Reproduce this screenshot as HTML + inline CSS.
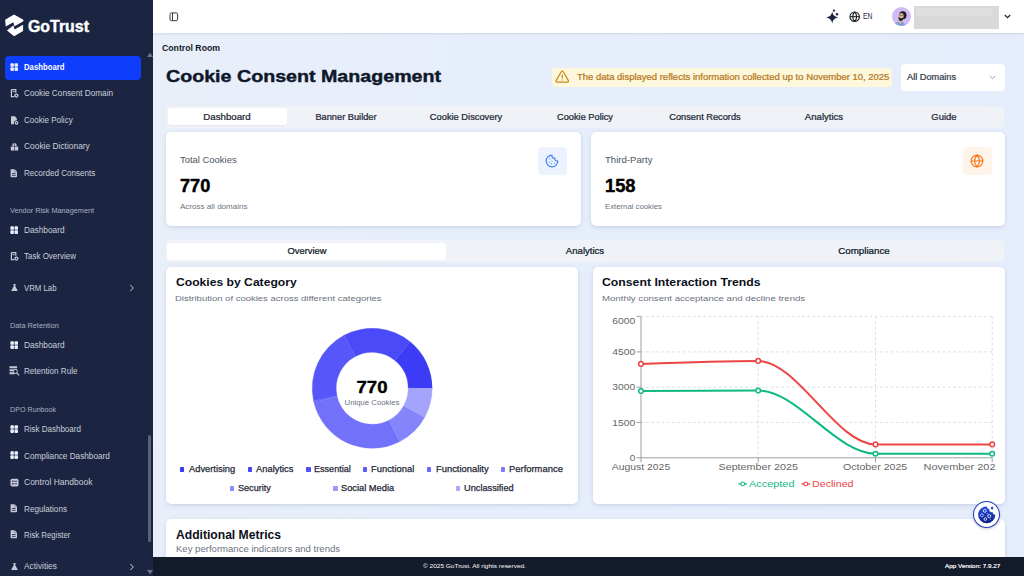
<!DOCTYPE html>
<html><head><meta charset="utf-8">
<style>
*{box-sizing:border-box;margin:0;padding:0}
html,body{width:1024px;height:576px;overflow:hidden;font-family:"Liberation Sans",sans-serif;background:#e8effb}
.a{position:absolute}
.t{position:absolute;white-space:nowrap;line-height:1}
.card{position:absolute;background:#fff;border-radius:5px;box-shadow:0 1px 3px rgba(40,60,110,.10),0 2px 6px rgba(40,60,110,.06)}
</style></head><body>
<div class="a" style="left:0;top:0;width:153px;height:576px;background:#1b2542"></div>
<div class="a" style="left:5px;top:56px;width:136px;height:24px;background:#0f3dfc;border-radius:4px"></div>
<svg class="a" style="left:146.5px;top:52px" width="6" height="5" viewBox="0 0 6 5"><path d="M0 5L3 0.5L6 5z" fill="#6b7385"/></svg>
<svg class="a" style="left:146.5px;top:570px" width="6" height="5" viewBox="0 0 6 5"><path d="M0 0L3 4.5L6 0z" fill="#6b7385"/></svg>
<div class="a" style="left:147.5px;top:435px;width:3.6px;height:107px;background:#5b6272;border-radius:2px"></div>
<svg class="a" style="left:2px;top:10px" width="26" height="30" viewBox="0 0 499 576"><path d="M60,185 L230,85 L410,185 L410,215 L240,312 L218,236 L72,318 Z" fill="#fff"/><path d="M95,392 L220,292 L240,372 L405,282 L405,405 L232,505 Z" fill="#fff"/></svg>
<svg class="a" style="left:10.0px;top:62.7px" width="8" height="8" viewBox="0 0 8 8"><rect x=".4" y=".2" width="3.5" height="3.6" rx=".85" fill="#e9eefa"/><rect x="4.5" y=".2" width="3.5" height="3.6" rx=".85" fill="#e9eefa"/><rect x=".4" y="4.3" width="3.5" height="3.6" rx=".85" fill="#e9eefa"/><rect x="4.5" y="4.3" width="3.5" height="3.6" rx=".85" fill="#e9eefa"/></svg>
<svg class="a" style="left:10.0px;top:89.4px" width="9" height="9" viewBox="0 0 9 9"><path d="M1.4 .6h4.4v3.2" fill="none" stroke="#c5cad6" stroke-width="1.2"/><path d="M1.4 .6v7h2.8" fill="none" stroke="#c5cad6" stroke-width="1.2"/><rect x="2.6" y="2.2" width="2.2" height="1" fill="#c5cad6"/><circle cx="6.4" cy="6.6" r="2.1" fill="#c5cad6"/><circle cx="6.4" cy="6.6" r=".8" fill="#1b2542"/></svg>
<svg class="a" style="left:10.0px;top:116.0px" width="9" height="9" viewBox="0 0 9 9"><path d="M1 .3h3.8l2 2V4.6A2.4 2.4 0 0 0 4.2 8.3H1z" fill="#c5cad6"/><circle cx="6.5" cy="6.8" r="1.9" fill="#c5cad6"/><circle cx="6.5" cy="6.8" r=".7" fill="#1b2542"/></svg>
<svg class="a" style="left:10.0px;top:141.9px" width="9" height="9" viewBox="0 0 9 9"><path d="M2.3 3.2A2.2 2.2 0 0 1 6.7 3.2V4H2.3z" fill="#c5cad6"/><rect x=".8" y="4.6" width="7.4" height="4" rx=".6" fill="#c5cad6"/><rect x="4.2" y="1" width=".6" height="7.6" fill="#1b2542"/></svg>
<svg class="a" style="left:10.0px;top:168.5px" width="9" height="9" viewBox="0 0 9 9"><path d="M.6 .3h4.1l2.3 2.3V7.6Q7 8.3 6.3 8.3H1.3Q.6 8.3 .6 7.6z" fill="#c5cad6"/><rect x="2" y="4.2" width="3.6" height=".8" fill="#1b2542"/><rect x="2" y="5.9" width="3.6" height=".8" fill="#1b2542"/><path d="M4.4 .3v2.5h2.6" fill="none" stroke="#1b2542" stroke-width=".5" opacity=".6"/></svg>
<svg class="a" style="left:10.0px;top:225.7px" width="8" height="8" viewBox="0 0 8 8"><rect x=".4" y=".2" width="3.5" height="3.6" rx=".85" fill="#e9eefa"/><rect x="4.5" y=".2" width="3.5" height="3.6" rx=".85" fill="#e9eefa"/><rect x=".4" y="4.3" width="3.5" height="3.6" rx=".85" fill="#e9eefa"/><rect x="4.5" y="4.3" width="3.5" height="3.6" rx=".85" fill="#e9eefa"/></svg>
<svg class="a" style="left:10.0px;top:251.9px" width="9" height="9" viewBox="0 0 9 9"><path d="M1.4 .6h4.4v3.2" fill="none" stroke="#c5cad6" stroke-width="1.2"/><path d="M1.4 .6v7h2.8" fill="none" stroke="#c5cad6" stroke-width="1.2"/><rect x="2.6" y="2.2" width="2.2" height="1" fill="#c5cad6"/><circle cx="6.4" cy="6.6" r="2.1" fill="#c5cad6"/><circle cx="6.4" cy="6.6" r=".8" fill="#1b2542"/></svg>
<svg class="a" style="left:10.6px;top:284.2px" width="7" height="7" viewBox="0 0 9 9"><path d="M3 0h3v.9h-.4v2.4L8.5 8.2c.2.4 0 .8-.5.8H1c-.5 0-.7-.4-.5-.8L3.4 3.3V.9H3z" fill="#c5cad6"/></svg>
<svg class="a" style="left:10.0px;top:341.2px" width="8" height="8" viewBox="0 0 8 8"><rect x=".4" y=".2" width="3.5" height="3.6" rx=".85" fill="#e9eefa"/><rect x="4.5" y=".2" width="3.5" height="3.6" rx=".85" fill="#e9eefa"/><rect x=".4" y="4.3" width="3.5" height="3.6" rx=".85" fill="#e9eefa"/><rect x="4.5" y="4.3" width="3.5" height="3.6" rx=".85" fill="#e9eefa"/></svg>
<svg class="a" style="left:8.6px;top:365.3px" width="11" height="11" viewBox="0 0 11 11"><rect x=".5" y="1.2" width="7.6" height="2" rx=".3" fill="#c5cad6"/><rect x=".5" y="4.2" width="7.6" height="2" rx=".3" fill="#c5cad6"/><rect x=".5" y="7.2" width="5.4" height="2" rx=".3" fill="#c5cad6"/><circle cx="6.3" cy="6.4" r="2" fill="#1b2542" stroke="#c5cad6" stroke-width=".9"/><path d="M7.6 7.8l2.2 2.2" stroke="#c5cad6" stroke-width="1.1" stroke-linecap="round"/></svg>
<svg class="a" style="left:10.0px;top:425.0px" width="8" height="8" viewBox="0 0 8 8"><rect x=".4" y=".2" width="3.5" height="3.6" rx=".85" fill="#e9eefa"/><rect x="4.5" y=".2" width="3.5" height="3.6" rx=".85" fill="#e9eefa"/><rect x=".4" y="4.3" width="3.5" height="3.6" rx=".85" fill="#e9eefa"/><rect x="4.5" y="4.3" width="3.5" height="3.6" rx=".85" fill="#e9eefa"/></svg>
<svg class="a" style="left:10.0px;top:451.2px" width="8" height="8" viewBox="0 0 8 8"><rect x=".4" y=".2" width="3.5" height="3.6" rx=".85" fill="#e9eefa"/><rect x="4.5" y=".2" width="3.5" height="3.6" rx=".85" fill="#e9eefa"/><rect x=".4" y="4.3" width="3.5" height="3.6" rx=".85" fill="#e9eefa"/><rect x="4.5" y="4.3" width="3.5" height="3.6" rx=".85" fill="#e9eefa"/></svg>
<svg class="a" style="left:10.0px;top:477.7px" width="9" height="9" viewBox="0 0 9 9"><rect x=".5" y=".8" width="8" height="7.6" rx="1.6" fill="#c5cad6"/><rect x="2" y="2.6" width="1.5" height="1.3" fill="#1b2542"/><rect x="4.2" y="2.8" width="2.8" height=".8" fill="#1b2542"/><rect x="2" y="5.2" width="1.5" height="1.3" fill="#1b2542"/><rect x="4.2" y="5.4" width="2.8" height=".8" fill="#1b2542"/></svg>
<svg class="a" style="left:10.0px;top:504.4px" width="9" height="9" viewBox="0 0 9 9"><path d="M.6 .3h4.1l2.3 2.3V7.6Q7 8.3 6.3 8.3H1.3Q.6 8.3 .6 7.6z" fill="#c5cad6"/><rect x="2" y="4.2" width="3.6" height=".8" fill="#1b2542"/><rect x="2" y="5.9" width="3.6" height=".8" fill="#1b2542"/><path d="M4.4 .3v2.5h2.6" fill="none" stroke="#1b2542" stroke-width=".5" opacity=".6"/></svg>
<svg class="a" style="left:10.0px;top:530.4px" width="9" height="9" viewBox="0 0 9 9"><path d="M.6 .3h4.1l2.3 2.3V7.6Q7 8.3 6.3 8.3H1.3Q.6 8.3 .6 7.6z" fill="#c5cad6"/><rect x="2" y="4.2" width="3.6" height=".8" fill="#1b2542"/><rect x="2" y="5.9" width="3.6" height=".8" fill="#1b2542"/><path d="M4.4 .3v2.5h2.6" fill="none" stroke="#1b2542" stroke-width=".5" opacity=".6"/></svg>
<svg class="a" style="left:10.6px;top:563.2px" width="7" height="7" viewBox="0 0 9 9"><path d="M3 0h3v.9h-.4v2.4L8.5 8.2c.2.4 0 .8-.5.8H1c-.5 0-.7-.4-.5-.8L3.4 3.3V.9H3z" fill="#c5cad6"/></svg>
<svg class="a" style="left:129px;top:284.3px" width="6" height="8" viewBox="0 0 6 8"><path d="M1.3 1l3 3-3 3" fill="none" stroke="#c9cfda" stroke-width="1"/></svg><svg class="a" style="left:129px;top:563.3px" width="6" height="8" viewBox="0 0 6 8"><path d="M1.3 1l3 3-3 3" fill="none" stroke="#c9cfda" stroke-width="1"/></svg>
<div class="a" style="left:153px;top:33px;width:871px;height:524px;background:linear-gradient(100deg,#e9eff9 0%,#e6eefb 40%,#e5edfc 100%)"></div>
<div class="a" style="left:153px;top:0;width:871px;height:33px;background:#fff;box-shadow:0 1px 2px rgba(60,80,120,.14)"></div>
<svg class="a" style="left:169px;top:11.8px" width="10" height="10" viewBox="0 0 10 10"><rect x="1" y=".9" width="7.6" height="7.8" rx="1.5" fill="none" stroke="#3a3a3a" stroke-width="1"/><line x1="3.5" y1=".9" x2="3.5" y2="8.7" stroke="#3a3a3a" stroke-width="1"/></svg>
<svg class="a" style="left:825px;top:8.5px" width="15" height="15" viewBox="0 0 15 15"><path d="M7.2 2.6 Q8 8.2 13.4 8.4 Q8 8.8 7.2 14.4 Q6.4 8.8 1 8.4 Q6.4 8.2 7.2 2.6z" fill="#1c2541"/><circle cx="9" cy="1.6" r="1.1" fill="#1c2541"/><circle cx="12" cy="5.3" r="1.2" fill="#1c2541"/></svg>
<svg class="a" style="left:848.7px;top:10.9px" width="11.4" height="11.4" viewBox="0 0 24 24" fill="none" stroke="#1f1f1f" stroke-width="2.3"><circle cx="12" cy="12" r="10"/><path d="M12 2a14.5 14.5 0 0 0 0 20 14.5 14.5 0 0 0 0-20"/><path d="M2 12h20"/></svg>
<div class="a" style="left:891.8px;top:6.8px;width:19.4px;height:19.4px;border-radius:50%;background:#cfbcf7;overflow:hidden"><svg width="19.4" height="19.4" viewBox="0 0 19.4 19.4"><path d="M2.8 19.4 Q3.5 14.6 7.5 14.2 Q12.6 14 13.6 19.4z" fill="#7c9fd8"/><path d="M6.6 12.5 L9.6 12.8 L9.4 16.4 Q7.8 16.8 6.4 15.6z" fill="#e3b291"/><ellipse cx="10.8" cy="8.2" rx="3.7" ry="3.9" fill="#1f1d1f"/><ellipse cx="9.3" cy="8.9" rx="2.4" ry="2.8" fill="#dcae92"/><path d="M6.6 9.6 Q6.2 13.6 8.6 13.9 Q11.4 14 11.6 10.6 Q10.6 11.8 9 11.6 Q7.6 11.4 6.6 9.6z" fill="#1b1a1c"/><path d="M6.9 8.3h4.6" stroke="#3a3a3a" stroke-width=".5"/></svg></div>
<div class="a" style="left:914px;top:6.4px;width:85px;height:22.4px;background:#d9d9d9"></div>
<div class="a" style="left:915.5px;top:8.4px;width:76px;height:7.4px;background:#dfdfdf;border-radius:1px"></div>
<svg class="a" style="left:1004px;top:14px" width="7" height="5" viewBox="0 0 7 5"><path d="M.8 1l2.7 2.7L6.2 1" fill="none" stroke="#222" stroke-width="1.2"/></svg>
<div class="a" style="left:552px;top:67.8px;width:340px;height:19.2px;background:#fdf7dc;border-radius:3px"></div>
<svg class="a" style="left:554.5px;top:70.2px" width="14.5" height="13" viewBox="0 0 24 22" fill="none" stroke="#c98a1b" stroke-width="2.1" stroke-linecap="round" stroke-linejoin="round"><path d="M10.3 2.9L1.8 17.6a2 2 0 0 0 1.7 3h17a2 2 0 0 0 1.7-3L13.7 2.9a2 2 0 0 0-3.4 0z"/><path d="M12 8.5v4.5"/><path d="M12 16.8h.01"/></svg>
<div class="a" style="left:900.5px;top:63.6px;width:104px;height:27px;background:#fff;border-radius:4px"></div>
<svg class="a" style="left:989px;top:74.5px" width="7" height="5" viewBox="0 0 7 5"><path d="M.7 .9l2.8 2.8L6.3 .9" fill="none" stroke="#9b9ea4" stroke-width="1"/></svg>
<div class="a" style="left:166px;top:106px;width:838px;height:21.5px;background:#eff3f8;border-radius:4px"></div>
<div class="a" style="left:167.6px;top:107.6px;width:119px;height:17px;background:#fff;border-radius:3px;box-shadow:0 .5px 1px rgba(0,0,0,.04)"></div>
<div class="card" style="left:166px;top:131.8px;width:414.5px;height:94.2px"></div>
<div class="card" style="left:590.5px;top:131.8px;width:414.5px;height:94.2px"></div>
<div class="a" style="left:537.7px;top:146.6px;width:29px;height:28.4px;background:#edf3fe;border-radius:4px"></div>
<svg class="a" style="left:544.6px;top:154.3px" width="14" height="14" viewBox="0 0 24 24" fill="none" stroke="#3b82f6" stroke-width="2" stroke-linecap="round" stroke-linejoin="round"><path d="M12 2a10 10 0 1 0 10 10 4 4 0 0 1-5-5 4 4 0 0 1-5-5"/><path d="M8.5 8.5v.01"/><path d="M16 15.5v.01"/><path d="M12 12v.01"/><path d="M11 17v.01"/><path d="M7 14v.01"/></svg>
<div class="a" style="left:962.5px;top:146.6px;width:29px;height:28.4px;background:#fff4ea;border-radius:4px"></div>
<svg class="a" style="left:969.6px;top:154.3px" width="14" height="14" viewBox="0 0 24 24" fill="none" stroke="#f97316" stroke-width="2" stroke-linecap="round" stroke-linejoin="round"><circle cx="12" cy="12" r="10"/><path d="M12 2a14.5 14.5 0 0 0 0 20 14.5 14.5 0 0 0 0-20"/><path d="M2 12h20"/></svg>
<div class="a" style="left:166px;top:240px;width:838px;height:21.5px;background:#eff3f8;border-radius:4px"></div>
<div class="a" style="left:167.3px;top:242.6px;width:278.7px;height:17px;background:#fff;border-radius:3px"></div>
<div class="card" style="left:166.2px;top:266.8px;width:412px;height:237.5px"></div>
<div class="card" style="left:592.9px;top:266.8px;width:412px;height:237.5px"></div>
<div class="card" style="left:166px;top:519px;width:839px;height:60px"></div>
<svg class="a" style="left:0;top:0" width="1024" height="576"><path d="M432.20,388.30 A60.0,60.0 0 0 0 410.20,341.87 L395.00,360.44 A36.0,36.0 0 0 1 408.20,388.30 Z" fill="#3c3cf6" stroke="#3c3cf6" stroke-width=".3"/><path d="M410.20,341.87 A60.0,60.0 0 0 0 344.03,335.32 L355.30,356.51 A36.0,36.0 0 0 1 395.00,360.44 Z" fill="#4a4af8" stroke="#4a4af8" stroke-width=".3"/><path d="M344.03,335.32 A60.0,60.0 0 0 0 313.51,400.77 L336.99,395.78 A36.0,36.0 0 0 1 355.30,356.51 Z" fill="#5656f9" stroke="#5656f9" stroke-width=".3"/><path d="M313.51,400.77 A60.0,60.0 0 0 0 313.86,402.31 L337.19,396.70 A36.0,36.0 0 0 1 336.99,395.78 Z" fill="#6262f9" stroke="#6262f9" stroke-width=".3"/><path d="M313.86,402.31 A60.0,60.0 0 0 0 399.90,441.52 L388.82,420.23 A36.0,36.0 0 0 1 337.19,396.70 Z" fill="#7171fa" stroke="#7171fa" stroke-width=".3"/><path d="M399.90,441.52 A60.0,60.0 0 0 0 424.78,417.21 L403.75,405.64 A36.0,36.0 0 0 1 388.82,420.23 Z" fill="#8585fb" stroke="#8585fb" stroke-width=".3"/><path d="M424.78,417.21 A60.0,60.0 0 0 0 432.20,388.30 L408.20,388.30 A36.0,36.0 0 0 1 403.75,405.64 Z" fill="#a4a4fc" stroke="#a4a4fc" stroke-width=".3"/></svg>
<div class="a" style="left:179.6px;top:467.1px;width:4.6px;height:4.7px;border-radius:.8px;background:#3a3af4"></div><div class="a" style="left:247.6px;top:467.1px;width:4.6px;height:4.7px;border-radius:.8px;background:#4545f6"></div><div class="a" style="left:306.2px;top:467.1px;width:4.6px;height:4.7px;border-radius:.8px;background:#5050f7"></div><div class="a" style="left:362.7px;top:467.1px;width:4.6px;height:4.7px;border-radius:.8px;background:#5b5bf8"></div><div class="a" style="left:426.9px;top:467.1px;width:4.6px;height:4.7px;border-radius:.8px;background:#6a6af9"></div><div class="a" style="left:500.9px;top:467.1px;width:4.6px;height:4.7px;border-radius:.8px;background:#7a7afa"></div><div class="a" style="left:229.5px;top:486.3px;width:4.6px;height:4.7px;border-radius:.8px;background:#8b8bfa"></div><div class="a" style="left:333.1px;top:486.3px;width:4.6px;height:4.7px;border-radius:.8px;background:#9999fb"></div><div class="a" style="left:455.7px;top:486.3px;width:4.6px;height:4.7px;border-radius:.8px;background:#a9a9fc"></div>
<svg class="a" style="left:0;top:0;font-family:'Liberation Sans',sans-serif" width="1024" height="576"><defs><clipPath id="cc"><rect x="596" y="300" width="399.5" height="180"/></clipPath></defs><line x1="641" y1="316.4" x2="992.5" y2="316.4" stroke="#d6d9de" stroke-width=".9" stroke-dasharray="2.6 2.6"/><line x1="641" y1="351.9" x2="992.5" y2="351.9" stroke="#d6d9de" stroke-width=".9" stroke-dasharray="2.6 2.6"/><line x1="641" y1="387.1" x2="992.5" y2="387.1" stroke="#d6d9de" stroke-width=".9" stroke-dasharray="2.6 2.6"/><line x1="641" y1="422.4" x2="992.5" y2="422.4" stroke="#d6d9de" stroke-width=".9" stroke-dasharray="2.6 2.6"/><line x1="758.2" y1="316.4" x2="758.2" y2="457.8" stroke="#d6d9de" stroke-width=".9" stroke-dasharray="2.6 2.6"/><line x1="875.5" y1="316.4" x2="875.5" y2="457.8" stroke="#d6d9de" stroke-width=".9" stroke-dasharray="2.6 2.6"/><line x1="992.2" y1="316.4" x2="992.2" y2="457.8" stroke="#d6d9de" stroke-width=".9" stroke-dasharray="2.6 2.6"/><line x1="641" y1="316.4" x2="641" y2="457.8" stroke="#9b9ea4" stroke-width="1"/><line x1="641" y1="457.8" x2="992.5" y2="457.8" stroke="#9b9ea4" stroke-width="1"/><line x1="636.5" y1="316.4" x2="641" y2="316.4" stroke="#9b9ea4" stroke-width="1"/><line x1="636.5" y1="351.9" x2="641" y2="351.9" stroke="#9b9ea4" stroke-width="1"/><line x1="636.5" y1="387.1" x2="641" y2="387.1" stroke="#9b9ea4" stroke-width="1"/><line x1="636.5" y1="422.4" x2="641" y2="422.4" stroke="#9b9ea4" stroke-width="1"/><line x1="636.5" y1="457.8" x2="641" y2="457.8" stroke="#9b9ea4" stroke-width="1"/><line x1="641.0" y1="457.8" x2="641.0" y2="462.3" stroke="#9b9ea4" stroke-width="1"/><line x1="758.2" y1="457.8" x2="758.2" y2="462.3" stroke="#9b9ea4" stroke-width="1"/><line x1="875.5" y1="457.8" x2="875.5" y2="462.3" stroke="#9b9ea4" stroke-width="1"/><line x1="992.2" y1="457.8" x2="992.2" y2="462.3" stroke="#9b9ea4" stroke-width="1"/><g clip-path="url(#cc)"><text x="635.2" y="324.1" text-anchor="end" font-size="8.6" fill="#666" textLength="22.9" lengthAdjust="spacingAndGlyphs">6000</text><text x="635.2" y="355.1" text-anchor="end" font-size="8.6" fill="#666" textLength="22.9" lengthAdjust="spacingAndGlyphs">4500</text><text x="635.2" y="390.4" text-anchor="end" font-size="8.6" fill="#666" textLength="22.9" lengthAdjust="spacingAndGlyphs">3000</text><text x="635.2" y="425.5" text-anchor="end" font-size="8.6" fill="#666" textLength="22.9" lengthAdjust="spacingAndGlyphs">1500</text><text x="635.2" y="461.1" text-anchor="end" font-size="8.6" fill="#666" textLength="5.5" lengthAdjust="spacingAndGlyphs">0</text><text x="641.0" y="469.8" text-anchor="middle" font-size="8.6" fill="#666" textLength="58.4" lengthAdjust="spacingAndGlyphs">August 2025</text><text x="758.2" y="469.8" text-anchor="middle" font-size="8.6" fill="#666" textLength="79.4" lengthAdjust="spacingAndGlyphs">September 2025</text><text x="875.1" y="469.8" text-anchor="middle" font-size="8.6" fill="#666" textLength="64.2" lengthAdjust="spacingAndGlyphs">October 2025</text><text x="962.6" y="469.8" text-anchor="middle" font-size="8.6" fill="#666" textLength="78.0" lengthAdjust="spacingAndGlyphs">November 2025</text></g><path d="M641.00,391.00C680.07,390.80 719.13,390.60 758.20,390.60C797.30,390.60 836.40,453.70 875.50,453.70C914.40,453.70 953.30,453.70 992.20,453.70" fill="none" stroke="#10b981" stroke-width="2"/><path d="M641.00,363.90C680.07,362.40 719.13,360.90 758.20,360.90C797.30,360.90 836.40,444.40 875.50,444.40C914.40,444.40 953.30,444.40 992.20,444.40" fill="none" stroke="#ef4444" stroke-width="2"/><circle cx="641.0" cy="391.0" r="2.3" fill="#fff" stroke="#10b981" stroke-width="1.5"/><circle cx="758.2" cy="390.6" r="2.3" fill="#fff" stroke="#10b981" stroke-width="1.5"/><circle cx="875.5" cy="453.7" r="2.3" fill="#fff" stroke="#10b981" stroke-width="1.5"/><circle cx="992.2" cy="453.7" r="2.3" fill="#fff" stroke="#10b981" stroke-width="1.5"/><circle cx="641.0" cy="363.9" r="2.3" fill="#fff" stroke="#ef4444" stroke-width="1.5"/><circle cx="758.2" cy="360.9" r="2.3" fill="#fff" stroke="#ef4444" stroke-width="1.5"/><circle cx="875.5" cy="444.4" r="2.3" fill="#fff" stroke="#ef4444" stroke-width="1.5"/><circle cx="992.2" cy="444.4" r="2.3" fill="#fff" stroke="#ef4444" stroke-width="1.5"/><line x1="738.4" y1="483.9" x2="747" y2="483.9" stroke="#10b981" stroke-width="1.3"/><circle cx="742.7" cy="483.9" r="1.9" fill="#fff" stroke="#10b981" stroke-width="1.1"/><line x1="801.5" y1="483.9" x2="810.1" y2="483.9" stroke="#ef4444" stroke-width="1.3"/><circle cx="805.8" cy="483.9" r="1.9" fill="#fff" stroke="#ef4444" stroke-width="1.1"/></svg>
<div class="a" style="left:153px;top:557px;width:871px;height:19px;background:#131a2a"></div>
<div class="a" style="left:972.8px;top:500.7px;width:27.2px;height:27px;border-radius:50%;background:#fff;border:1.3px solid #1f3fc4;box-shadow:0 1px 3px rgba(0,0,0,.2)"></div>
<svg class="a" style="left:976.5px;top:504.5px" width="19.5" height="19.5" viewBox="0 0 20 20"><defs><linearGradient id="cg" x1="0" y1="0" x2="0" y2="1"><stop offset="0" stop-color="#2b52e0"/><stop offset="1" stop-color="#0c1f8a"/></linearGradient></defs><path d="M10 1.2A8.8 8.8 0 1 0 18.8 10 2.6 2.6 0 0 1 16 7.3 2.6 2.6 0 0 1 12.7 4 2.6 2.6 0 0 1 10 1.2z" fill="url(#cg)"/><circle cx="15.5" cy="3.2" r="1.3" fill="#2440c8"/><circle cx="8" cy="6" r="1.5" fill="none" stroke="#fff" stroke-width=".8"/><circle cx="5" cy="10.5" r="1.5" fill="none" stroke="#c9d3ff" stroke-width=".8"/><circle cx="12.5" cy="11.5" r="1.6" fill="none" stroke="#fff" stroke-width=".8"/><circle cx="8.5" cy="14.5" r="1.3" fill="none" stroke="#fff" stroke-width=".8"/><circle cx="10.5" cy="9" r=".5" fill="#fff"/><circle cx="14" cy="15" r=".5" fill="#fff"/></svg>
<span class="t" id="t0" style="left:27.80px;top:18.04px;font-size:16.42px;font-weight:700;color:#ffffff;transform:scaleX(0.9690);transform-origin:0 0;-webkit-text-stroke:0.41px #ffffff">GoTrust</span>
<span class="t" id="t1" style="left:24.20px;top:63.56px;font-size:8.28px;font-weight:700;color:#ffffff;transform:scaleX(0.9370);transform-origin:0 0">Dashboard</span>
<span class="t" id="t2" style="left:24.20px;top:90.26px;font-size:8.28px;font-weight:400;color:#c9cfda;transform:scaleX(0.9944);transform-origin:0 0">Cookie Consent Domain</span>
<span class="t" id="t3" style="left:24.20px;top:116.86px;font-size:8.28px;font-weight:400;color:#c9cfda;transform:scaleX(0.9721);transform-origin:0 0">Cookie Policy</span>
<span class="t" id="t4" style="left:24.20px;top:142.76px;font-size:8.28px;font-weight:400;color:#c9cfda;transform:scaleX(1.0158);transform-origin:0 0">Cookie Dictionary</span>
<span class="t" id="t5" style="left:24.20px;top:170.36px;font-size:8.28px;font-weight:400;color:#c9cfda;transform:scaleX(0.9757);transform-origin:0 0">Recorded Consents</span>
<span class="t" id="t6" style="left:24.20px;top:226.56px;font-size:8.28px;font-weight:400;color:#c9cfda;transform:scaleX(1.0015);transform-origin:0 0">Dashboard</span>
<span class="t" id="t7" style="left:24.20px;top:252.76px;font-size:8.28px;font-weight:400;color:#c9cfda;transform:scaleX(0.9671);transform-origin:0 0">Task Overview</span>
<span class="t" id="t8" style="left:24.20px;top:285.06px;font-size:8.28px;font-weight:400;color:#c9cfda;transform:scaleX(0.9449);transform-origin:0 0">VRM Lab</span>
<span class="t" id="t9" style="left:24.20px;top:342.06px;font-size:8.28px;font-weight:400;color:#c9cfda;transform:scaleX(1.0015);transform-origin:0 0">Dashboard</span>
<span class="t" id="t10" style="left:24.20px;top:368.06px;font-size:8.28px;font-weight:400;color:#c9cfda;transform:scaleX(0.9780);transform-origin:0 0">Retention Rule</span>
<span class="t" id="t11" style="left:24.20px;top:425.86px;font-size:8.28px;font-weight:400;color:#c9cfda;transform:scaleX(0.9672);transform-origin:0 0">Risk Dashboard</span>
<span class="t" id="t12" style="left:24.20px;top:453.06px;font-size:8.28px;font-weight:400;color:#c9cfda;transform:scaleX(0.9943);transform-origin:0 0">Compliance Dashboard</span>
<span class="t" id="t13" style="left:24.20px;top:478.56px;font-size:8.28px;font-weight:400;color:#c9cfda;transform:scaleX(1.0266);transform-origin:0 0">Control Handbook</span>
<span class="t" id="t14" style="left:24.20px;top:506.26px;font-size:8.28px;font-weight:400;color:#c9cfda;transform:scaleX(0.9847);transform-origin:0 0">Regulations</span>
<span class="t" id="t15" style="left:24.20px;top:532.26px;font-size:8.28px;font-weight:400;color:#c9cfda;transform:scaleX(0.9454);transform-origin:0 0">Risk Register</span>
<span class="t" id="t16" style="left:24.20px;top:563.06px;font-size:8.28px;font-weight:400;color:#c9cfda;transform:scaleX(1.0085);transform-origin:0 0">Activities</span>
<span class="t" id="t17" style="left:9.60px;top:208.35px;font-size:7.12px;font-weight:400;color:#a9b1c1;transform:scaleX(1.0272);transform-origin:0 0">Vendor Risk Management</span>
<span class="t" id="t18" style="left:9.60px;top:322.95px;font-size:7.12px;font-weight:400;color:#a9b1c1;transform:scaleX(1.0296);transform-origin:0 0">Data Retention</span>
<span class="t" id="t19" style="left:9.60px;top:406.95px;font-size:7.12px;font-weight:400;color:#a9b1c1;transform:scaleX(1.0062);transform-origin:0 0">DPO Runbook</span>
<span class="t" id="t20" style="left:862.50px;top:11.94px;font-size:9.01px;font-weight:400;color:#1f2937;transform:scaleX(0.7599);transform-origin:0 0">EN</span>
<span class="t" id="t21" style="left:162.40px;top:43.54px;font-size:9.01px;font-weight:700;color:#111827;transform:scaleX(0.9670);transform-origin:0 0">Control Room</span>
<span class="t" id="t22" style="left:166.00px;top:69.09px;font-size:16.72px;font-weight:700;color:#0f172a;transform:scaleX(1.1761);transform-origin:0 0;-webkit-text-stroke:0.42px #0f172a">Cookie Consent Management</span>
<span class="t" id="t23" style="left:577.00px;top:73.68px;font-size:8.14px;font-weight:400;color:#b7791f;transform:scaleX(1.1663);transform-origin:0 0;-webkit-text-stroke:0.23px #b7791f">The data displayed reflects information collected up to November 10, 2025</span>
<span class="t" id="t24" style="left:907.30px;top:73.68px;font-size:8.14px;font-weight:400;color:#374151;transform:scaleX(1.1313);transform-origin:0 0;-webkit-text-stroke:0.23px #374151">All Domains</span>
<span class="t" id="t25" style="left:227.20px;top:113.13px;font-size:8.43px;font-weight:400;color:#1f2937;transform:translateX(-50%) scaleX(1.1524);transform-origin:50% 0;-webkit-text-stroke:0.24px #1f2937">Dashboard</span>
<span class="t" id="t26" style="left:346.30px;top:113.13px;font-size:8.43px;font-weight:400;color:#1f2937;transform:translateX(-50%) scaleX(1.0976);transform-origin:50% 0;-webkit-text-stroke:0.24px #1f2937">Banner Builder</span>
<span class="t" id="t27" style="left:465.70px;top:113.13px;font-size:8.43px;font-weight:400;color:#1f2937;transform:translateX(-50%) scaleX(1.1042);transform-origin:50% 0;-webkit-text-stroke:0.24px #1f2937">Cookie Discovery</span>
<span class="t" id="t28" style="left:585.00px;top:113.13px;font-size:8.43px;font-weight:400;color:#1f2937;transform:translateX(-50%) scaleX(1.0965);transform-origin:50% 0;-webkit-text-stroke:0.24px #1f2937">Cookie Policy</span>
<span class="t" id="t29" style="left:704.60px;top:113.13px;font-size:8.43px;font-weight:400;color:#1f2937;transform:translateX(-50%) scaleX(1.0980);transform-origin:50% 0;-webkit-text-stroke:0.24px #1f2937">Consent Records</span>
<span class="t" id="t30" style="left:824.20px;top:113.13px;font-size:8.43px;font-weight:400;color:#1f2937;transform:translateX(-50%) scaleX(1.1356);transform-origin:50% 0;-webkit-text-stroke:0.24px #1f2937">Analytics</span>
<span class="t" id="t31" style="left:943.50px;top:113.13px;font-size:8.43px;font-weight:400;color:#1f2937;transform:translateX(-50%) scaleX(1.1238);transform-origin:50% 0;-webkit-text-stroke:0.24px #1f2937">Guide</span>
<span class="t" id="t32" style="left:180.40px;top:156.33px;font-size:8.43px;font-weight:400;color:#4b5563;transform:scaleX(1.1207);transform-origin:0 0">Total Cookies</span>
<span class="t" id="t33" style="left:180.40px;top:178.10px;font-size:17.88px;font-weight:700;color:#000000;transform:scaleX(1.0160);transform-origin:0 0;-webkit-text-stroke:0.45px #000000">770</span>
<span class="t" id="t34" style="left:180.40px;top:203.55px;font-size:7.12px;font-weight:400;color:#6b7280;transform:scaleX(1.1326);transform-origin:0 0">Across all domains</span>
<span class="t" id="t35" style="left:604.60px;top:156.33px;font-size:8.43px;font-weight:400;color:#4b5563;transform:scaleX(1.1397);transform-origin:0 0">Third-Party</span>
<span class="t" id="t36" style="left:604.60px;top:178.10px;font-size:17.88px;font-weight:700;color:#000000;transform:scaleX(1.0230);transform-origin:0 0;-webkit-text-stroke:0.45px #000000">158</span>
<span class="t" id="t37" style="left:604.60px;top:203.55px;font-size:7.12px;font-weight:400;color:#6b7280;transform:scaleX(1.0900);transform-origin:0 0">External cookies</span>
<span class="t" id="t38" style="left:306.50px;top:247.19px;font-size:8.72px;font-weight:400;color:#111827;transform:translateX(-50%) scaleX(1.0776);transform-origin:50% 0;-webkit-text-stroke:0.24px #111827">Overview</span>
<span class="t" id="t39" style="left:585.30px;top:247.19px;font-size:8.72px;font-weight:400;color:#111827;transform:translateX(-50%) scaleX(1.0970);transform-origin:50% 0;-webkit-text-stroke:0.24px #111827">Analytics</span>
<span class="t" id="t40" style="left:864.00px;top:247.19px;font-size:8.72px;font-weight:400;color:#111827;transform:translateX(-50%) scaleX(1.1181);transform-origin:50% 0;-webkit-text-stroke:0.24px #111827">Compliance</span>
<span class="t" id="t41" style="left:175.70px;top:276.99px;font-size:11.19px;font-weight:700;color:#0b0f1a;transform:scaleX(1.0847);transform-origin:0 0">Cookies by Category</span>
<span class="t" id="t42" style="left:175.40px;top:294.90px;font-size:7.99px;font-weight:400;color:#6b7280;transform:scaleX(1.1884);transform-origin:0 0">Distribution of cookies across different categories</span>
<span class="t" id="t43" style="left:602.30px;top:276.99px;font-size:11.19px;font-weight:700;color:#0b0f1a;transform:scaleX(1.0945);transform-origin:0 0">Consent Interaction Trends</span>
<span class="t" id="t44" style="left:602.30px;top:294.90px;font-size:7.99px;font-weight:400;color:#6b7280;transform:scaleX(1.2046);transform-origin:0 0">Monthly consent acceptance and decline trends</span>
<span class="t" id="t45" style="left:372.20px;top:379.45px;font-size:17.01px;font-weight:700;color:#000000;transform:translateX(-50%) scaleX(1.0930);transform-origin:50% 0;-webkit-text-stroke:0.43px #000000">770</span>
<span class="t" id="t46" style="left:372.20px;top:400.34px;font-size:6.54px;font-weight:400;color:#6b7280;transform:translateX(-50%) scaleX(1.1899);transform-origin:50% 0">Unique Cookies</span>
<span class="t" id="t47" style="left:188.80px;top:465.46px;font-size:8.87px;font-weight:400;color:#1f2937;transform:scaleX(1.0532);transform-origin:0 0;-webkit-text-stroke:0.25px #1f2937">Advertising</span>
<span class="t" id="t48" style="left:256.10px;top:465.46px;font-size:8.87px;font-weight:400;color:#1f2937;transform:scaleX(1.0567);transform-origin:0 0;-webkit-text-stroke:0.25px #1f2937">Analytics</span>
<span class="t" id="t49" style="left:314.20px;top:465.46px;font-size:8.87px;font-weight:400;color:#1f2937;transform:scaleX(1.0220);transform-origin:0 0;-webkit-text-stroke:0.25px #1f2937">Essential</span>
<span class="t" id="t50" style="left:371.20px;top:465.46px;font-size:8.87px;font-weight:400;color:#1f2937;transform:scaleX(1.0580);transform-origin:0 0;-webkit-text-stroke:0.25px #1f2937">Functional</span>
<span class="t" id="t51" style="left:435.60px;top:465.46px;font-size:8.87px;font-weight:400;color:#1f2937;transform:scaleX(1.0586);transform-origin:0 0;-webkit-text-stroke:0.25px #1f2937">Functionality</span>
<span class="t" id="t52" style="left:509.40px;top:465.46px;font-size:8.87px;font-weight:400;color:#1f2937;transform:scaleX(1.0620);transform-origin:0 0;-webkit-text-stroke:0.25px #1f2937">Performance</span>
<span class="t" id="t53" style="left:238.00px;top:483.66px;font-size:8.87px;font-weight:400;color:#1f2937;transform:scaleX(1.0259);transform-origin:0 0;-webkit-text-stroke:0.25px #1f2937">Security</span>
<span class="t" id="t54" style="left:341.20px;top:483.66px;font-size:8.87px;font-weight:400;color:#1f2937;transform:scaleX(1.0478);transform-origin:0 0;-webkit-text-stroke:0.25px #1f2937">Social Media</span>
<span class="t" id="t55" style="left:464.20px;top:483.66px;font-size:8.87px;font-weight:400;color:#1f2937;transform:scaleX(1.0395);transform-origin:0 0;-webkit-text-stroke:0.25px #1f2937">Unclassified</span>
<span class="t" id="t56" style="left:748.80px;top:480.19px;font-size:8.72px;font-weight:400;color:#10b981;transform:scaleX(1.2501);transform-origin:0 0">Accepted</span>
<span class="t" id="t57" style="left:812.00px;top:480.19px;font-size:8.72px;font-weight:400;color:#ef4444;transform:scaleX(1.2240);transform-origin:0 0">Declined</span>
<span class="t" id="t58" style="left:175.60px;top:529.08px;font-size:12.50px;font-weight:700;color:#0b0f1a;transform:scaleX(0.9694);transform-origin:0 0">Additional Metrics</span>
<span class="t" id="t59" style="left:175.60px;top:546.16px;font-size:8.28px;font-weight:400;color:#6b7280;transform:scaleX(1.1556);transform-origin:0 0">Key performance indicators and trends</span>
<span class="t" id="t60" style="left:423.40px;top:564.26px;font-size:5.81px;font-weight:400;color:#ffffff;transform:scaleX(1.1182);transform-origin:0 0">© 2025 GoTrust. All rights reserved.</span>
<span class="t" id="t61" style="left:945.10px;top:564.08px;font-size:5.67px;font-weight:400;color:#ffffff;transform:scaleX(1.1196);transform-origin:0 0;-webkit-text-stroke:0.16px #ffffff">App Version: 7.9.27</span>
</body></html>
